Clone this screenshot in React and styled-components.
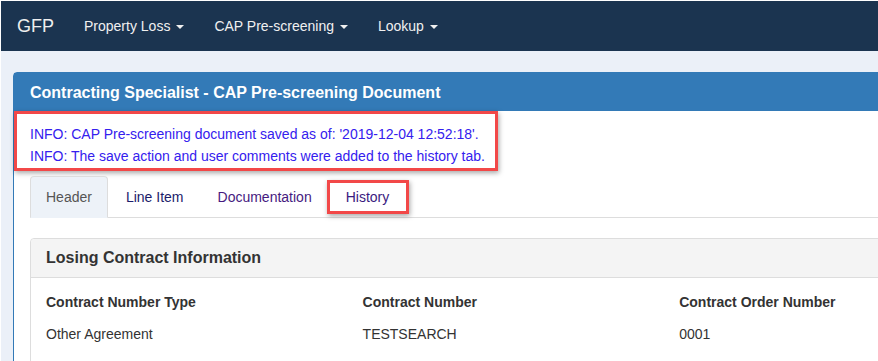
import React from "react";
import styled, { createGlobalStyle } from "styled-components";

const Global = createGlobalStyle`
  html, body { margin: 0; padding: 0; background: #fff; overflow: hidden; }
  body { font-family: "Liberation Sans", Arial, sans-serif; font-size: 14px; color: #333; line-height: 20px; }
  * { box-sizing: border-box; }
`;

const Page = styled.div`
  padding: 1px 0 0 1px;
  min-height: 361px;
  background: #fff;
  overflow: hidden;
`;

const Navbar = styled.nav`
  height: 50px;
  background: #1b3450;
  display: flex;
  align-items: center;
`;

const Brand = styled.a`
  padding: 0 15px 0 16px;
  font-size: 18px;
  color: #eeeeee;
  line-height: 50px;
`;

const NavLink = styled.a`
  padding: 0 15px;
  font-size: 14px;
  color: #f0f0f0;
  line-height: 50px;
  display: flex;
  align-items: center;
  gap: 5px;
`;

const Caret = styled.span`
  display: inline-block;
  width: 0;
  height: 0;
  border-top: 4px solid #f0f0f0;
  border-left: 4px solid transparent;
  border-right: 4px solid transparent;
  margin-left: 1px;
  margin-top: 2px;
`;

const Main = styled.main`
  background: #ebf0f8;
  padding: 21px 0 0 12px;
  min-height: 310px;
  overflow: hidden;
`;

const Panel = styled.section`
  width: 1000px;
  background: #fff;
  border: 1px solid #337ab7;
  border-radius: 4px 0 0 0;
  min-height: 300px;
`;

const PanelHeading = styled.h2`
  margin: 0;
  background: #337ab7;
  color: #fff;
  font-size: 16px;
  font-weight: bold;
  height: 38px;
  line-height: 20px;
  padding: 10px 16px 8px;
`;

const PanelBody = styled.div`
  padding: 0 16px 0 16px;
`;

const InfoBox = styled.div`
  display: inline-block;
  margin-left: -16px;
  border: 3px solid #f24848;
  box-shadow: 1px 2px 5px rgba(0, 0, 0, 0.35);
  padding: 9px 10px 1px 13px;
  color: #3420ee;
  font-size: 14px;
  line-height: 22px;
`;

const Tabs = styled.ul`
  list-style: none;
  margin: 5px 0 0 0;
  padding: 0;
  display: flex;
  border-bottom: 1px solid #dddddd;
  height: 42px;
`;

const Tab = styled.li`
  position: relative;
  margin-right: 2px;
  padding: 10px 15px;
  line-height: 20px;
  height: 42px;
  border: 1px solid ${(p) => (p.$active ? "#dddddd" : "transparent")};
  border-bottom-color: ${(p) => (p.$active ? "#edf2f8" : "transparent")};
  border-radius: 4px 4px 0 0;
  background: ${(p) => (p.$active ? "#edf2f8" : "transparent")};
  color: ${(p) => p.$color};
  &::after {
    content: "";
    display: ${(p) => (p.$highlight ? "block" : "none")};
    position: absolute;
    left: -4px;
    right: -5px;
    top: 3px;
    bottom: 3px;
    border: 3px solid #f24848;
    box-shadow: 1px 2px 5px rgba(0, 0, 0, 0.35);
  }
`;

const SubPanel = styled.section`
  margin-top: 20px;
  border: 1px solid #dddddd;
  border-radius: 4px 0 0 0;
  width: 980px;
`;

const SubHeading = styled.h3`
  margin: 0;
  background: #f4f4f4;
  border-bottom: 1px solid #dddddd;
  height: 39px;
  padding: 9px 15px;
  font-size: 16px;
  font-weight: bold;
  color: #333;
  line-height: 20px;
  border-radius: 4px 0 0 0;
`;

const SubBody = styled.div`
  padding: 14px 15px 40px;
  display: grid;
  grid-template-columns: repeat(3, 316.6px);
`;

const Field = styled.div`
  display: flex;
  flex-direction: column;
  gap: 12px;
`;

const Label = styled.div`
  font-weight: bold;
  color: #333;
`;

const Value = styled.div`
  color: #333;
`;

const navItems = ["Property Loss", "CAP Pre-screening", "Lookup"];

const tabs = [
  { label: "Header", color: "#555555", active: true },
  { label: "Line Item", color: "#1c1c6a" },
  { label: "Documentation", color: "#461a80" },
  { label: "History", color: "#3a1a80", highlight: true },
];

const fields = [
  ["Contract Number Type", "Other Agreement"],
  ["Contract Number", "TESTSEARCH"],
  ["Contract Order Number", "0001"],
];

export default function App() {
  return (
    <Page>
      <Global />
      <Navbar>
        <Brand>GFP</Brand>
        {navItems.map((n) => (
          <NavLink key={n}>
            {n} <Caret />
          </NavLink>
        ))}
      </Navbar>
      <Main>
        <Panel>
          <PanelHeading>Contracting Specialist - CAP Pre-screening Document</PanelHeading>
          <PanelBody>
            <InfoBox>
              INFO: CAP Pre-screening document saved as of: '2019-12-04 12:52:18'.
              <br />
              INFO: The save action and user comments were added to the history tab.
            </InfoBox>
            <Tabs>
              {tabs.map((t) => (
                <Tab key={t.label} $active={t.active} $color={t.color} $highlight={t.highlight}>
                  {t.label}
                </Tab>
              ))}
            </Tabs>
            <SubPanel>
              <SubHeading>Losing Contract Information</SubHeading>
              <SubBody>
                {fields.map(([l, v]) => (
                  <Field key={l}>
                    <Label>{l}</Label>
                    <Value>{v}</Value>
                  </Field>
                ))}
              </SubBody>
            </SubPanel>
          </PanelBody>
        </Panel>
      </Main>
    </Page>
  );
}
